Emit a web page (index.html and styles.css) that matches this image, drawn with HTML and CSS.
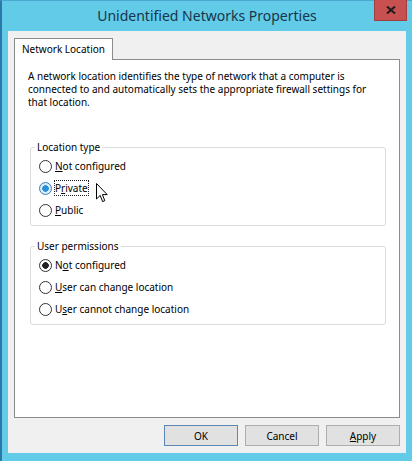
FILE: index.html
```html
<!DOCTYPE html>
<html lang="en">
<head>
    <meta charset="UTF-8">
    <title>Unidentified Networks Properties</title>
    <link rel="stylesheet" href="styles.css">
</head>
<body>

<div class="window">
    <div class="titlebar">
        <span></span>
        <div class="title">Unidentified Networks Properties</div>
        <div class="close">
            <svg width="10" height="8" viewBox="0 0 10 8"><path d="M1 0.5 L9 7.5 M9 0.5 L1 7.5" stroke="#1c1c1c" stroke-width="2"/></svg>
        </div>
    </div>

    <div class="client">
        <div class="tab">Network Location</div>
        <div class="panel">
            <p class="intro">A network location identifies the type of network that a computer is<br>connected to and automatically sets the appropriate firewall settings for<br>that location.</p>

            <fieldset class="group">
                <legend>Location type</legend>
                <div class="option"><span class="radio"></span><span class="label"><u>N</u>ot configured</span></div>
                <div class="option"><span class="radio hot checked"></span><span class="label focus">P<u>r</u>ivate</span></div>
                <div class="option"><span class="radio"></span><span class="label"><u>P</u>ublic</span></div>
            </fieldset>

            <fieldset class="group second">
                <legend>User permissions</legend>
                <div class="option"><span class="radio checked"></span><span class="label">N<u>o</u>t configured</span></div>
                <div class="option"><span class="radio"></span><span class="label"><u>U</u>ser can change location</span></div>
                <div class="option"><span class="radio"></span><span class="label">U<u>s</u>er cannot change location</span></div>
            </fieldset>
        </div>

        <div class="buttons">
            <button class="default">OK</button>
            <button>Cancel</button>
            <button><u>A</u>pply</button>
        </div>
    </div>

    <svg class="cursor" width="12" height="20" viewBox="0 0 12 20">
        <path d="M0.5 0.5 L0.5 16 L4.2 12.4 L6.6 18.6 L8.8 17.7 L6.4 11.6 L11.2 11.6 Z" fill="#fff" stroke="#000" stroke-width="1"/>
    </svg>
</div>

</body>
</html>
```

FILE: styles.css
```css
body {
    margin: 0;
    background-color: #62cbe8;
    font-family: 'Noto Sans', 'Open Sans', sans-serif;
    font-size: 10px;
    color: #000;
}

.window {
    width: 412px;
    height: 461px;
    box-sizing: border-box;
    border-left: 2px solid #2b79a8;
    border-top: 1px solid #4aa9d0;
    display: flex;
    flex-direction: column;
    position: relative;
}

.titlebar {
    height: 30px;
    display: grid;
    grid-template-columns: 1fr auto 1fr;
    align-items: start;
}

.title {
    font-size: 14px;
    line-height: 30px;
    color: #17364a;
}

.close {
    justify-self: end;
    margin-right: 5px;
    margin-top: -1px;
    width: 33px;
    height: 21px;
    box-sizing: border-box;
    background-color: #c75050;
    border: 1px solid #a33e3e;
    border-top: none;
    display: flex;
    align-items: center;
    justify-content: center;
}

.client {
    flex: 1;
    margin: 0 6px 8px 6px;
    padding: 7px 6px 0 6px;
    background-color: #f0f0f0;
    display: flex;
    flex-direction: column;
}

.tab {
    align-self: flex-start;
    width: 99px;
    height: 22px;
    box-sizing: border-box;
    padding-left: 7px;
    line-height: 20px;
    white-space: nowrap;
    background-color: #fff;
    border: 1px solid #8c8c8c;
    border-bottom: none;
    margin-bottom: -1px;
    position: relative;
    z-index: 1;
}

.panel {
    height: 359px;
    box-sizing: border-box;
    background-color: #fff;
    border: 1px solid #8c8c8c;
    padding: 10px 13px 0 13px;
}

.intro {
    margin: 0;
    line-height: 13px;
    white-space: nowrap;
}

.group {
    margin: 30px 0 0 2px;
    width: 356px;
    box-sizing: border-box;
    border: 1px solid #dcdcdc;
    border-radius: 3px;
    padding: 0 8px 4px 8px;
}

.group.second {
    margin-top: 12px;
}

.group legend {
    padding: 0 2px;
    margin-left: -4px;
    line-height: 16px;
}

.option {
    display: flex;
    align-items: center;
    height: 22px;
}

.radio {
    width: 13px;
    height: 13px;
    box-sizing: border-box;
    border: 1px solid #333;
    border-radius: 50%;
    background-color: #fff;
    margin-right: 3px;
}

.radio.checked {
    background: radial-gradient(circle, #222 0 3px, #fff 3.6px);
}

.radio.hot {
    border-color: #3c7fb1;
}

.radio.hot.checked {
    background: radial-gradient(circle, #2b8fd8 0 3px, #d9ecfa 3.6px);
}

.label {
    line-height: 14px;
    border: 1px solid transparent;
    margin-left: -1px;
}

.label.focus {
    border: 1px dotted #222;
}

.buttons {
    display: flex;
    justify-content: flex-end;
    gap: 7px;
    padding-top: 7px;
}

button {
    width: 74px;
    height: 21px;
    padding: 0;
    font: inherit;
    color: #000;
    background-color: #e1e1e1;
    border: 1px solid #adadad;
}

button.default {
    border-color: #5b87b5;
}

.cursor {
    position: absolute;
    left: 94px;
    top: 182px;
}
```
